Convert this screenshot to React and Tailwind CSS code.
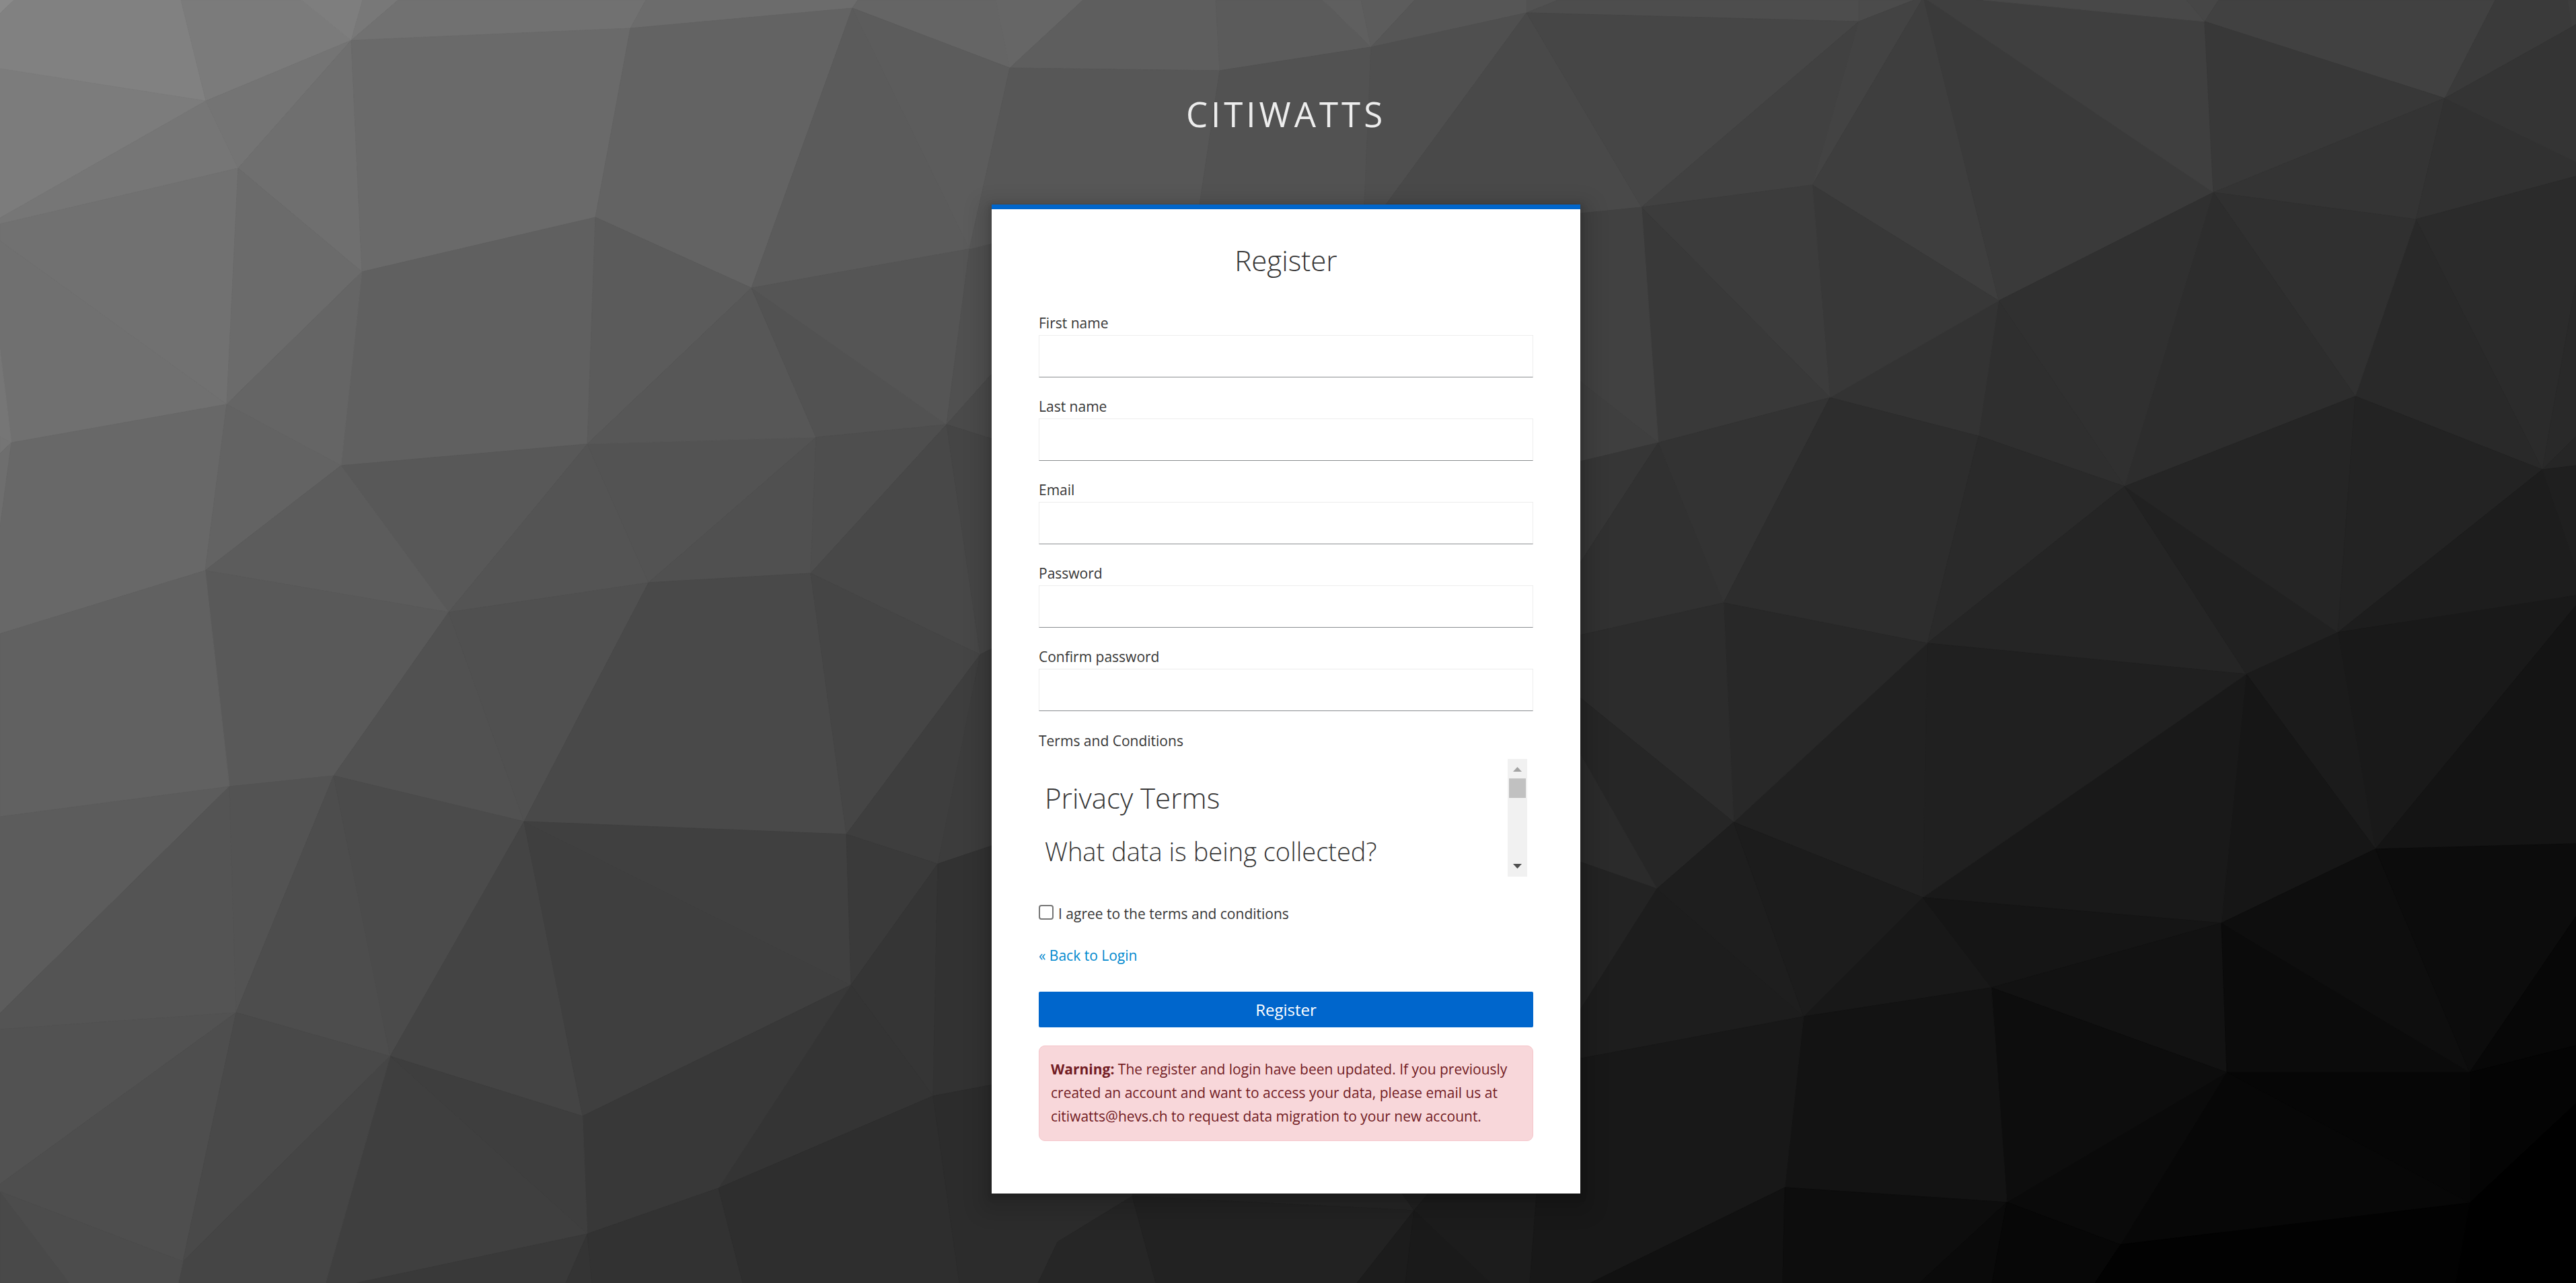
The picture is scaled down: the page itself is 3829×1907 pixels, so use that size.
const FACES = [
  ["#8a8a8a", "0,0 21,0 0,20"],
  ["#818181", "21,0 269,0 306,150 0,102 0,20"],
  ["#7b7b7b", "269,0 448,0 522,60 306,150"],
  ["#7e7e7e", "448,0 539,0 522,60"],
  ["#787878", "539,0 592,0 522,60"],
  ["#717171", "592,0 960,0 937,42 522,60"],
  ["#6c6c6c", "960,0 1275,0 1267,12 937,42"],
  ["#656565", "1275,0 1480,0 1501,101 1267,12"],
  ["#666666", "1480,0 1610,0 1501,101"],
  ["#5e5e5e", "1610,0 1807,0 1813,105 1501,101"],
  ["#5b5b5b", "1807,0 1966,0 2038,70 1813,105"],
  ["#5f5f5f", "1966,0 2023,0 2038,70"],
  ["#5c5c5c", "2023,0 2103,0 2038,70"],
  ["#565656", "2103,0 2269,0 2269,19 2038,70"],
  ["#525252", "2269,0 2316,0 2269,19"],
  ["#4d4d4d", "2316,0 2763,0 2763,32 2269,19"],
  ["#4b4b4b", "2763,0 2845,0 2763,32"],
  ["#7c7c7c", "306,150 0,102 0,324"],
  ["#767676", "306,150 354,250 0,333 0,324"],
  ["#747474", "306,150 522,60 354,250"],
  ["#6f6f6f", "522,60 354,250 538,404"],
  ["#6a6a6a", "522,60 937,42 885,323 538,404"],
  ["#636363", "937,42 1267,12 1117,428 885,323"],
  ["#5b5b5b", "1267,12 1441,370 1117,428"],
  ["#5c5c5c", "1267,12 1501,101 1441,370"],
  ["#717171", "354,250 337,601 0,358 0,333"],
  ["#707070", "0,358 337,601 17,658 0,520"],
  ["#6b6b6b", "354,250 538,404 337,601"],
  ["#606060", "538,404 885,323 873,660 507,692"],
  ["#656565", "538,404 507,692 337,601"],
  ["#767676", "0,520 17,658 0,649"],
  ["#757575", "0,649 17,658 0,674"],
  ["#6e6e6e", "17,658 0,784 0,674"],
  ["#686868", "17,658 337,601 305,848 0,942 0,784"],
  ["#636363", "337,601 507,692 305,848"],
  ["#585858", "507,692 873,660 667,910"],
  ["#5c5c5c", "507,692 667,910 305,848"],
  ["#545454", "873,660 964,866 667,910"],
  ["#535353", "873,660 1213,650 964,866"],
  ["#5b5b5b", "1117,428 885,323 873,660"],
  ["#575757", "1117,428 873,660 1213,650"],
  ["#525252", "1117,428 1213,650 1407,631"],
  ["#555555", "1117,428 1441,370 1407,631"],
  ["#505050", "1213,650 1205,852 964,866"],
  ["#4e4e4e", "1213,650 1407,631 1205,852"],
  ["#484848", "1407,631 1205,852 1457,973"],
  ["#505050", "1441,370 1600,330 1600,415 1407,631"],
  ["#4a4a4a", "1600,415 1407,631 1600,692"],
  ["#454545", "1407,631 1600,692 1600,900 1457,973"],
  ["#595959", "305,848 667,910 496,1153 341,1169"],
  ["#616161", "305,848 0,942 0,1214 341,1169"],
  ["#515151", "667,910 496,1153 779,1221"],
  ["#505050", "667,910 964,866 779,1221"],
  ["#494949", "964,866 1205,852 1258,1240 779,1221"],
  ["#454545", "1205,852 1457,973 1258,1240"],
  ["#3e3e3e", "1457,973 1258,1240 1394,1284"],
  ["#3c3c3c", "1457,973 1394,1284 1600,1215 1600,900"],
  ["#5c5c5c", "341,1169 0,1214 0,1506"],
  ["#545454", "341,1169 0,1506 0,1530 351,1505"],
  ["#535353", "341,1169 496,1153 351,1505"],
  ["#4d4d4d", "496,1153 351,1505 580,1570"],
  ["#4b4b4b", "496,1153 779,1221 580,1570"],
  ["#444444", "779,1221 580,1570 866,1659"],
  ["#3f3f3f", "779,1221 866,1659 1265,1464"],
  ["#404040", "779,1221 1258,1240 1265,1464"],
  ["#3a3a3a", "1258,1240 1394,1284 1265,1464"],
  ["#353535", "1394,1284 1265,1464 1387,1629"],
  ["#323232", "1394,1284 1387,1629 1600,1589 1600,1215"],
  ["#343434", "1265,1464 1387,1629 1068,1766"],
  ["#383838", "866,1659 1265,1464 1068,1766 873,1834"],
  ["#3e3e3e", "866,1659 580,1570 873,1834"],
  ["#3f3f3f", "580,1570 873,1834 530,1907 484,1907"],
  ["#525252", "351,1505 0,1530 0,1760"],
  ["#4e4e4e", "351,1505 272,1875 0,1771 0,1760"],
  ["#494949", "351,1505 580,1570 272,1875"],
  ["#454545", "580,1570 272,1875 265,1907 484,1907"],
  ["#494949", "0,1771 103,1907 0,1907"],
  ["#4c4c4c", "0,1771 272,1875 265,1907 103,1907"],
  ["#393939", "873,1834 530,1907 841,1907"],
  ["#343434", "873,1834 841,1907 880,1907"],
  ["#323232", "873,1834 1068,1766 1104,1907 880,1907"],
  ["#2e2e2e", "1068,1766 1387,1629 1426,1907 1104,1907"],
  ["#2c2c2c", "1387,1629 1700,1570 1683,1778 1572,1846 1543,1907 1426,1907"],
  ["#262626", "1683,1778 1572,1846 1543,1907 1718,1907"],
  ["#252525", "1700,1570 2084,1774 2102,1799 1683,1778"],
  ["#222222", "1683,1778 2102,1799 2017,1907 1718,1907"],
  ["#202020", "2084,1774 2123,1774 2102,1799"],
  ["#1c1c1c", "2102,1799 2017,1907 2089,1907"],
  ["#1a1a1a", "2102,1799 2089,1907 2216,1907"],
  ["#1c1c1c", "2123,1774 2284,1774 2274,1907 2216,1907 2102,1799"],
  ["#575757", "1501,101 1813,105 1783,304 1760,400 1600,400 1600,330 1441,370"],
  ["#525252", "1813,105 2038,70 2028,304 1783,304"],
  ["#4f4f4f", "2038,70 2269,19 2060,304 2028,304"],
  ["#494949", "2269,19 2440,308 2340,318 2060,304"],
  ["#464646", "2269,19 2763,32 2440,308"],
  ["#414141", "2763,32 2440,308 2694,275"],
  ["#434343", "2763,32 2694,275 2859,-4 2845,0"],
  ["#3e3e3e", "2859,-4 2694,275 2971,447"],
  ["#3a3a3a", "2859,-4 2971,447 3290,286"],
  ["#3f3f3f", "2859,-4 3290,286 3277,32 2948,0"],
  ["#484848", "2948,0 3250,0 3277,32"],
  ["#464646", "3250,0 3298,0 3277,32"],
  ["#414141", "3298,0 3277,32 3634,146 3709,0"],
  ["#3a3a3a", "3709,0 3634,146 3823,40 3817,0"],
  ["#3d3d3d", "3817,0 3829,0 3829,36 3823,40"],
  ["#383838", "3277,32 3290,286 3634,146"],
  ["#343434", "3290,286 3634,146 3591,326"],
  ["#313131", "3634,146 3591,326 3829,262 3829,241"],
  ["#343434", "3634,146 3823,40 3829,36 3829,241"],
  ["#2b2b2b", "3591,326 3779,698 3829,420 3829,262"],
  ["#292929", "3779,698 3829,420 3829,649"],
  ["#292929", "3591,326 3501,589 3779,698"],
  ["#303030", "3290,286 3591,326 3501,589"],
  ["#2d2d2d", "3290,286 3501,589 3158,723"],
  ["#303030", "3290,286 2971,447 3158,723"],
  ["#2f2f2f", "2971,447 2941,648 3158,723"],
  ["#333333", "2971,447 2720,591 2941,648"],
  ["#383838", "2694,275 2971,447 2720,591"],
  ["#3c3c3c", "2440,308 2694,275 2720,591"],
  ["#393939", "2440,308 2720,591 2465,658"],
  ["#414141", "2440,308 2465,658 2340,560 2340,318"],
  ["#3f3f3f", "2340,560 2465,658 2340,688"],
  ["#363636", "2465,658 2340,688 2340,850"],
  ["#313131", "2465,658 2340,850 2340,946 2562,896"],
  ["#333333", "2465,658 2720,591 2562,896"],
  ["#2d2d2d", "2720,591 2941,648 2865,956 2562,896"],
  ["#2a2a2a", "2941,648 3158,723 2865,956"],
  ["#252525", "3158,723 2865,956 3339,1002"],
  ["#212121", "3158,723 3339,1002 3475,940"],
  ["#252525", "3158,723 3501,589 3475,940"],
  ["#232323", "3501,589 3779,698 3475,940"],
  ["#1d1d1d", "3779,698 3475,940 3829,885 3829,845"],
  ["#262626", "3779,698 3829,649 3829,692"],
  ["#1f1f1f", "3779,698 3829,692 3829,845"],
  ["#191919", "3475,940 3829,885 3829,900 3531,1262"],
  ["#141414", "3829,900 3531,1262 3829,1254"],
  ["#1b1b1b", "3339,1002 3475,940 3531,1262"],
  ["#161616", "3339,1002 3531,1262 3302,1372"],
  ["#191919", "3339,1002 3302,1372 2858,1334"],
  ["#202020", "2865,956 3339,1002 2858,1334"],
  ["#212121", "2865,956 2577,1222 2858,1334"],
  ["#282828", "2562,896 2865,956 2577,1222"],
  ["#2c2c2c", "2562,896 2340,946 2340,1030 2577,1222"],
  ["#262626", "2340,1030 2577,1222 2463,1321 2340,1105"],
  ["#2b2b2b", "2340,1105 2463,1321 2340,1278"],
  ["#232323", "2463,1321 2340,1278 2340,1515"],
  ["#1d1d1d", "2463,1321 2340,1515 2340,1575 2681,1511"],
  ["#1e1e1e", "2577,1222 2463,1321 2681,1511"],
  ["#1c1c1c", "2577,1222 2681,1511 2858,1334"],
  ["#181818", "2858,1334 2681,1511 2960,1468"],
  ["#151515", "2858,1334 2960,1468 3302,1372"],
  ["#121212", "3302,1372 2960,1468 3310,1594"],
  ["#0b0b0b", "3302,1372 3310,1594 3671,1594"],
  ["#0e0e0e", "3302,1372 3531,1262 3671,1594"],
  ["#0c0c0c", "3531,1262 3671,1594 3829,1362 3829,1254"],
  ["#070707", "3671,1594 3829,1362 3829,1554"],
  ["#040404", "3671,1594 3829,1554 3829,1640 3671,1788"],
  ["#000000", "3671,1788 3829,1640 3829,1907 3650,1907"],
  ["#060606", "3310,1594 3671,1594 3671,1788"],
  ["#070707", "3310,1594 3671,1788 3152,1850"],
  ["#0a0a0a", "3310,1594 3152,1850 2983,1787"],
  ["#0d0d0d", "2960,1468 3310,1594 2983,1787"],
  ["#131313", "2960,1468 2681,1511 2653,1765 2983,1787"],
  ["#181818", "2681,1511 2653,1765 2364,1907 2274,1907 2284,1774 2340,1575"],
  ["#111111", "2653,1765 2364,1907 2650,1907"],
  ["#0d0d0d", "2653,1765 2983,1787 2853,1907 2650,1907"],
  ["#0a0a0a", "2983,1787 2853,1907 2961,1907"],
  ["#070707", "2983,1787 2961,1907 3114,1907 3152,1850"],
  ["#020202", "3152,1850 3114,1907 3650,1907 3671,1788"],
];

const FIELDS = [
  { id: "firstName", label: "First name", type: "text" },
  { id: "lastName", label: "Last name", type: "text" },
  { id: "email", label: "Email", type: "email" },
  { id: "password", label: "Password", type: "password" },
  { id: "passwordConfirm", label: "Confirm password", type: "password" },
];

function Backdrop() {
  return (
    <svg
      className="absolute inset-0 -z-10 h-full w-full"
      viewBox="0 0 3829 1907"
      preserveAspectRatio="xMidYMid slice"
      aria-hidden="true"
    >
      {FACES.map(([color, points]) => (
        <polygon key={points} points={points} fill={color} stroke={color} strokeWidth="1" strokeLinejoin="round" />
      ))}
    </svg>
  );
}

function Field({ id, label, type }) {
  return (
    <div className="mb-[26px]">
      <label htmlFor={id} className="block leading-[35px]">
        {label}
      </label>
      <input
        id={id}
        name={id}
        type={type}
        className="block h-[63px] w-full border border-[#ededed] border-b-[#8a8d90] bg-white px-3.5 outline-none"
      />
    </div>
  );
}

function Scrollbar() {
  return (
    <div className="flex w-[29px] shrink-0 flex-col items-center bg-[#f1f1f1]" aria-hidden="true">
      <svg className="h-[29px] w-[29px]" viewBox="0 0 29 29">
        <path d="M14.5 12 L21 19 H8 Z" fill="#a3a3a3" />
      </svg>
      <div className="h-[29px] w-[25px] bg-[#c1c1c1]" />
      <svg className="mt-auto h-[29px] w-[29px]" viewBox="0 0 29 29">
        <path d="M8 10 H21 L14.5 17 Z" fill="#505050" />
      </svg>
    </div>
  );
}

export default function App() {
  return (
    <div className="relative isolate min-h-screen overflow-hidden bg-[#262626] pr-[6px] pb-32 font-['Open_Sans',sans-serif] text-[21px] leading-[35px] text-[#363636]">
      <Backdrop />
      <header className="pt-[126px] pb-[92px] text-center text-[51px] leading-[86px] tracking-[5px] text-[#ededed] uppercase">
        Citiwatts
      </header>
      <main className="mx-auto w-full max-w-[875px] border-t-[7px] border-[#0066cc] bg-white px-[70px] pb-[78px] shadow-[0_3px_8px_3px_rgba(3,3,3,0.13),0_12px_26px_17px_rgba(3,3,3,0.12)]">
        <h1 className="pt-[48px] text-center text-[42px] leading-[56px] font-light">Register</h1>
        <form className="pt-[48px]">
          {FIELDS.map((field) => (
            <Field key={field.id} {...field} />
          ))}
          <div id="terms-label" className="pt-px">
            Terms and Conditions
          </div>
          <div className="mx-[9px] mt-[9px] flex h-[175px]" aria-labelledby="terms-label" role="region">
            <div className="h-full grow overflow-hidden">
              <h2 className="pt-[30px] text-[42px] leading-[56px] font-light">Privacy Terms</h2>
              <h3 className="pt-[24px] text-[38px] leading-[54px] font-light">What data is being collected?</h3>
            </div>
            <Scrollbar />
          </div>
          <div className="mt-[38px] flex">
            <input
              id="termsAccepted"
              name="termsAccepted"
              type="checkbox"
              className="mt-[4px] mr-[7px] h-[22px] w-[22px] shrink-0 appearance-none rounded-[4px] border-2 border-[#767676] bg-white"
            />
            <label htmlFor="termsAccepted">I agree to the terms and conditions</label>
          </div>
          <a href="#login" className="mt-[27px] block w-fit text-[#0088ce]">
            « Back to Login
          </a>
          <button
            type="submit"
            className="mt-[36px] block h-[53px] w-full rounded-[2px] bg-[#0066cc] text-[24px] leading-[35px] text-white"
          >
            Register
          </button>
        </form>
        <div
          role="alert"
          className="mt-[27px] rounded-[9px] border border-[#f5c6cb] bg-[#f8d7da] px-[17px] pt-[17px] pb-[18px] text-[#721c24]"
        >
          <strong className="font-bold">Warning:</strong> The register and login have been updated. If you previously
          created an account and want to access your data, please email us at citiwatts@hevs.ch to request data
          migration to your new account.
        </div>
      </main>
    </div>
  );
}
